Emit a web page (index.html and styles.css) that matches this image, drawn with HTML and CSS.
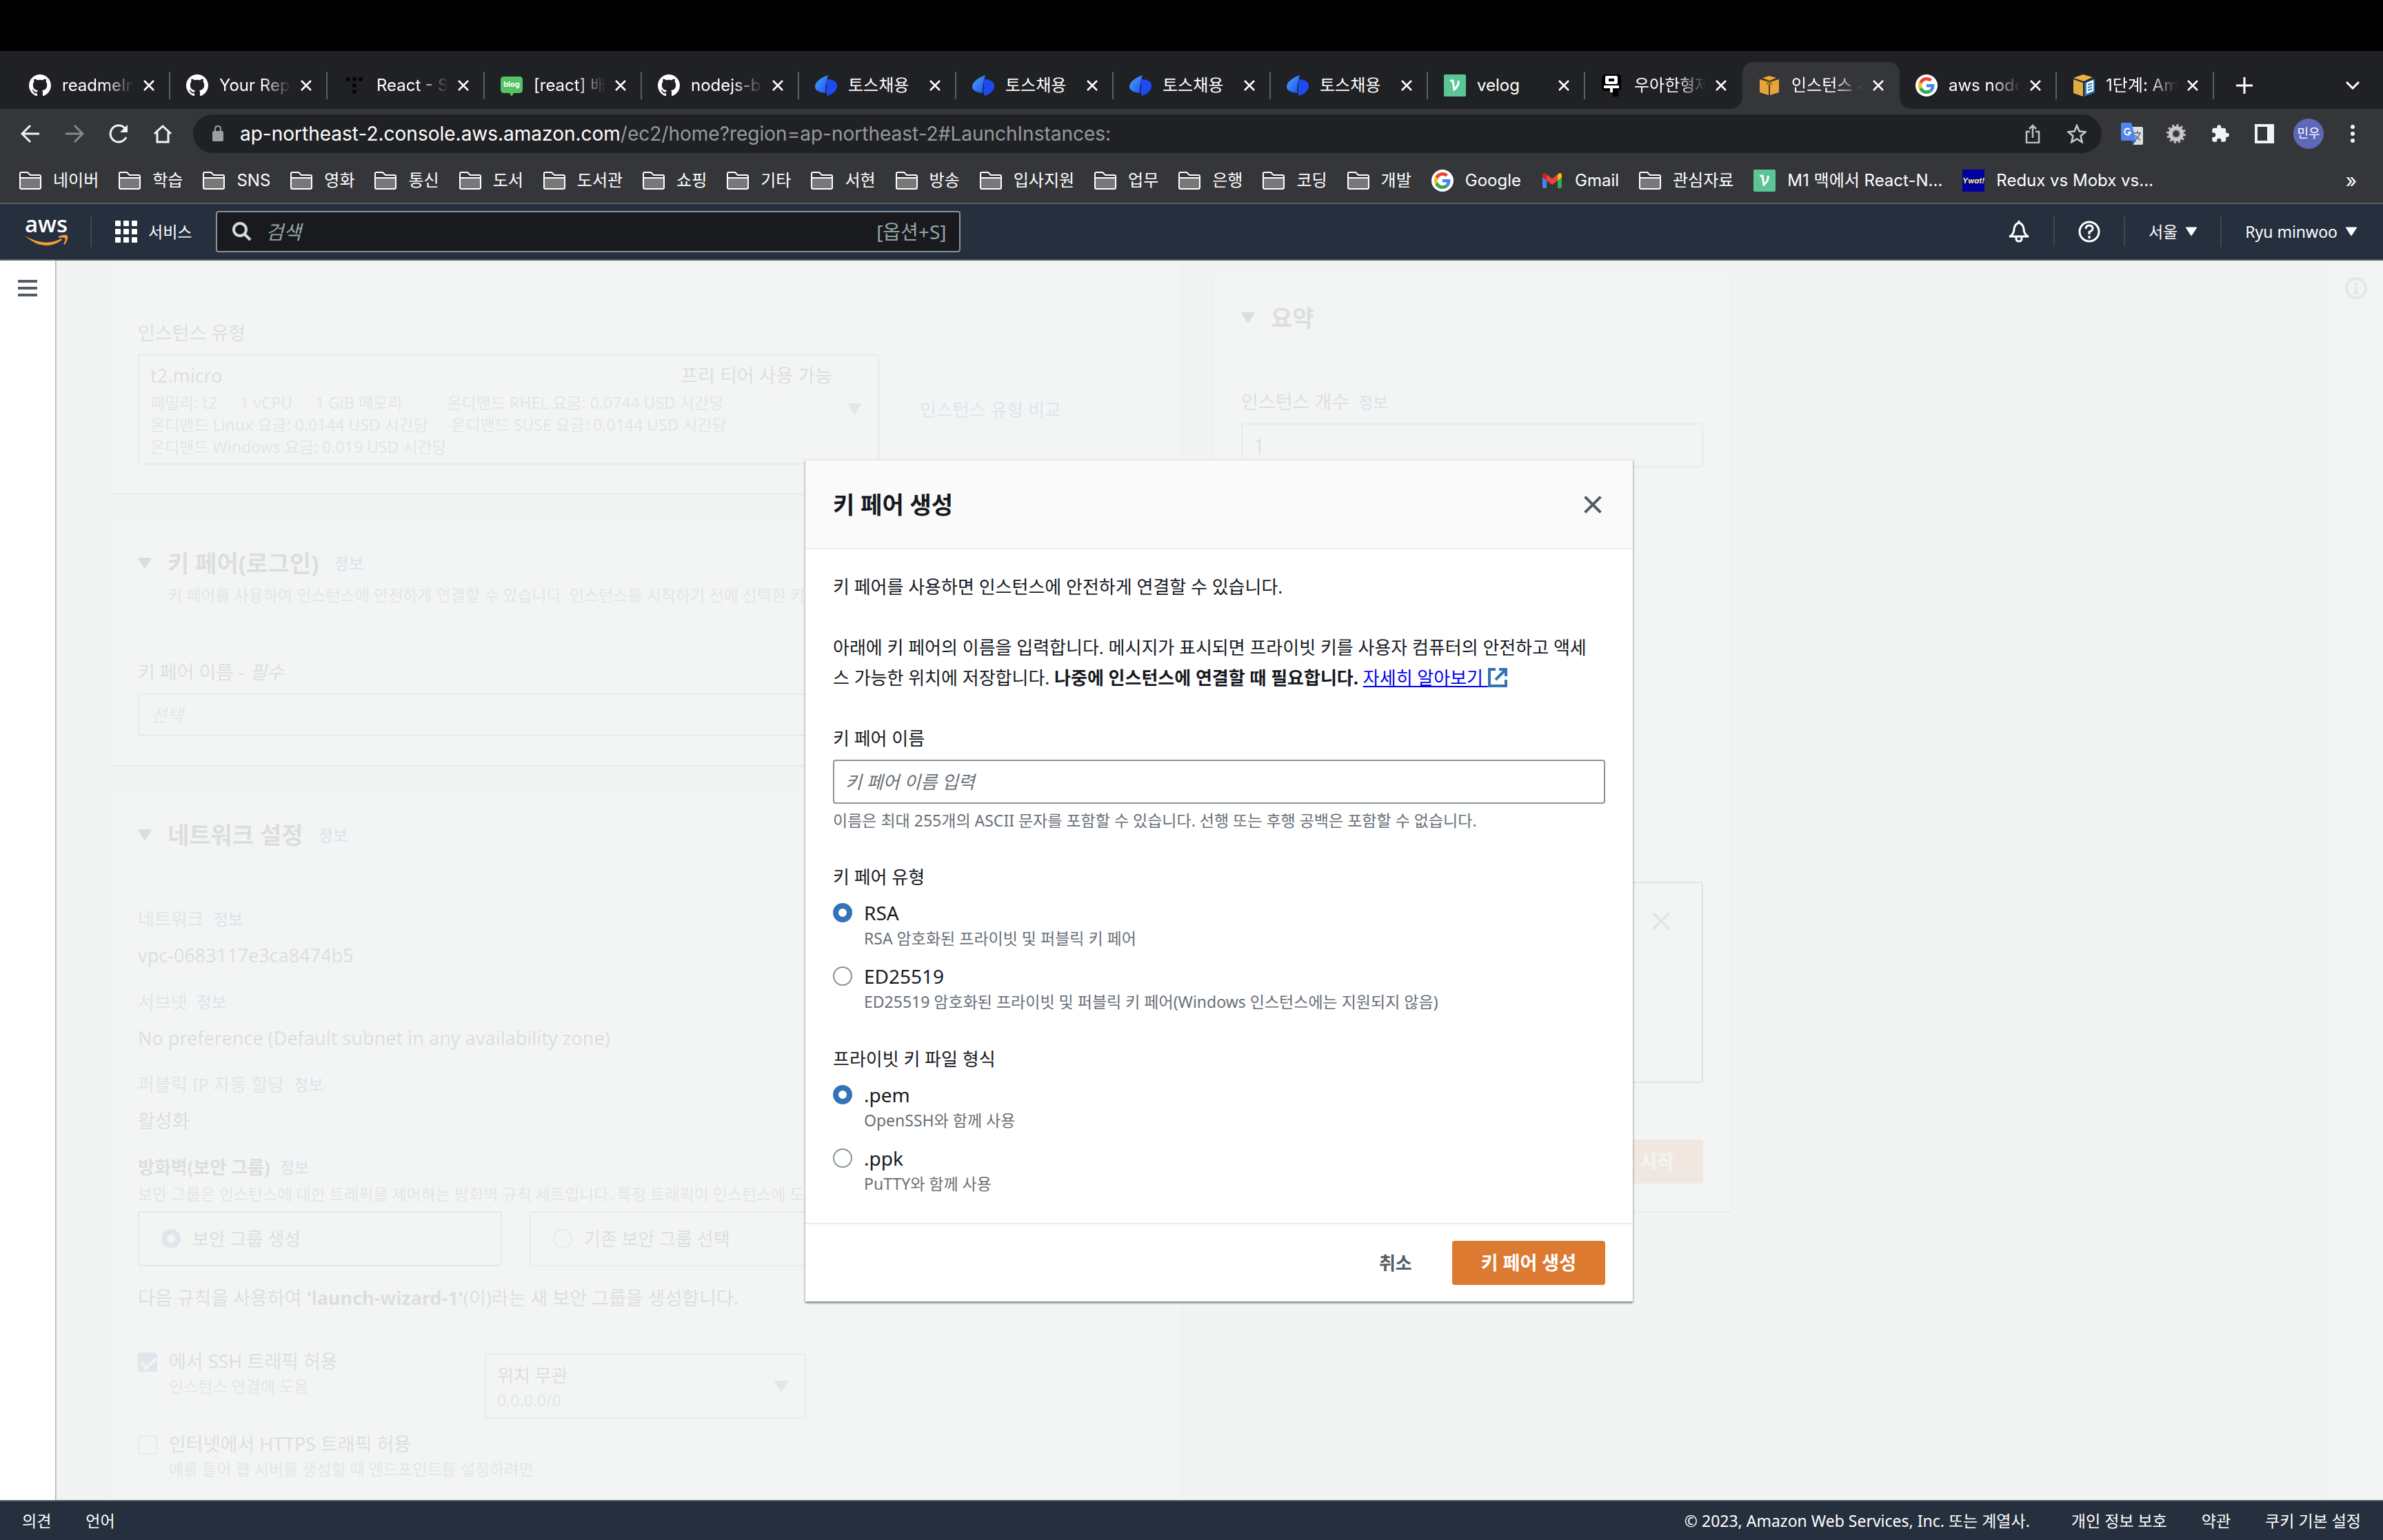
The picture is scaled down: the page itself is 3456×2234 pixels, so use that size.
FILE: index.html
```html
<!DOCTYPE html>
<html lang="ko">
<head>
<meta charset="utf-8">
<title>인스턴스 시작 | EC2 Management Console</title>
<link rel="stylesheet" href="styles.css">
</head>
<body>
<svg class="defs" aria-hidden="true">
  <symbol id="github" viewBox="0 0 16 16"><path fill="#fff" d="M8 0C3.58 0 0 3.58 0 8c0 3.54 2.29 6.53 5.47 7.59.4.07.55-.17.55-.38 0-.19-.01-.82-.01-1.49-2.01.37-2.53-.49-2.69-.94-.09-.23-.48-.94-.82-1.13-.28-.15-.68-.52-.01-.53.63-.01 1.08.58 1.23.82.72 1.21 1.87.87 2.33.66.07-.52.28-.87.51-1.07-1.78-.2-3.64-.89-3.64-3.95 0-.87.31-1.59.82-2.15-.08-.2-.36-1.02.08-2.12 0 0 .67-.21 2.2.82.64-.18 1.32-.27 2-.27s1.36.09 2 .27c1.53-1.04 2.2-.82 2.2-.82.44 1.1.16 1.92.08 2.12.51.56.82 1.27.82 2.15 0 3.07-1.87 3.75-3.65 3.95.29.25.54.73.54 1.48 0 1.07-.01 1.93-.01 2.2 0 .21.15.46.55.38A8.01 8.01 0 0 0 16 8c0-4.42-3.58-8-8-8z"/></symbol>
  <symbol id="dots-t" viewBox="0 0 32 32"><g fill="#050505"><circle cx="7" cy="7" r="3"/><circle cx="16" cy="7" r="3"/><circle cx="25" cy="7" r="3"/><circle cx="16" cy="16" r="3"/><circle cx="16" cy="25" r="3"/></g></symbol>
  <symbol id="toss" viewBox="0 0 32 32"><defs><linearGradient id="tg" x1="0" y1="0" x2="1" y2="1"><stop offset="0" stop-color="#4aa8fb"/><stop offset="1" stop-color="#1b4ff0"/></linearGradient></defs><path fill="#1c4bf2" d="M17 7c10 0 15 4 15 9 0 7-5 12-14 15-2-3-2-8-1-13z"/><path fill="url(#tg)" d="M19 1C8 5 0 11 0 18c0 5 6 8 15 9 0-9 1-17 4-26z"/></symbol>
  <symbol id="velog" viewBox="0 0 32 32"><rect width="32" height="32" rx="2" fill="#5cc596"/><path fill="none" stroke="#fff" stroke-width="3" d="M9 9h4l2 13c5-4 7-8 6-13"/></symbol>
  <symbol id="woowa" viewBox="0 0 32 32"><path fill="#000" d="M5 0h20q4 0 4 4v16q0 3-4 3v9h-8v-8H4l-3-3V3z"/><path fill="#fff" fill-rule="evenodd" d="M8 2h14q2 0 2 2v8q0 2-2 2H8q-2 0-2-2V4q0-2 2-2zm3 4v4h8V6zM4 16h22v4h-9v6h-4v-6H4z"/></symbol>
  <symbol id="ec2cube" viewBox="0 0 32 32"><path fill="#f0a72f" d="M16 2l10 3-10 4L6 5z"/><path fill="#e8a535" d="M2 7l13 4v19L2 26zM30 7l-13 4v19l13-4z"/><path fill="#b97516" d="M12 9l4 2 4-2v6h-8z"/></symbol>
  <symbol id="google" viewBox="0 0 48 48"><circle cx="24" cy="24" r="24" fill="#fff"/><g transform="translate(6 6) scale(.75)"><path fill="#EA4335" d="M24 9.500c3.540 0 6.710 1.220 9.210 3.600l6.850-6.850C35.900 2.380 30.470 0 24 0 14.620 0 6.510 5.380 2.560 13.220l7.980 6.190C12.430 13.720 17.740 9.500 24 9.500z"/><path fill="#4285F4" d="M46.980 24.550c0-1.570-.15-3.090-.38-4.550H24v9.020h12.940c-.58 2.960-2.260 5.480-4.780 7.180l7.730 6c4.510-4.180 7.090-10.360 7.090-17.650z"/><path fill="#FBBC05" d="M10.530 28.590c-.48-1.450-.76-2.990-.76-4.590s.27-3.140.76-4.590l-7.980-6.190C.92 16.460 0 20.120 0 24c0 3.880.92 7.540 2.560 10.780z"/><path fill="#34A853" d="M24 48c6.480 0 11.930-2.130 15.890-5.810l-7.730-6c-2.150 1.450-4.920 2.300-8.160 2.300-6.260 0-11.570-4.220-13.470-9.910l-7.980 6.190C6.510 42.620 14.620 48 24 48z"/></g></symbol>
  <symbol id="awsdocs" viewBox="0 0 32 32"><path fill="#e9b243" d="M15 0l14 4-13 6L1 5z"/><path fill="#e2ab40" d="M1 7l14 5v20L1 27z"/><path fill="#2a7ab8" d="M17 12l15-6v20l-15 6z"/><path fill="#fff" d="M20 12l10-4v16l-10 4z"/><path stroke="#2a7ab8" stroke-width="2" d="M22 15l6-2M22 19l6-2M22 23l6-2"/></symbol>
  <symbol id="close" viewBox="0 0 16 16"><path fill="none" stroke="currentColor" stroke-width="2.500" d="M1 1l14 14M15 1L1 15"/></symbol>
  <symbol id="folder" viewBox="0 0 32 26"><path fill="#77787a" d="M2 9h28v15H2z"/><path fill="none" stroke="#fff" stroke-width="2" d="M3 1h9l4 4h13q2 0 2 2v16q0 2-2 2H3q-2 0-2-2V3q0-2 2-2zM1 9h30"/></symbol>
  <symbol id="gmail" viewBox="0 0 32 32"><path fill="#4285f4" d="M2 8l6 5v14H4q-2 0-2-2z"/><path fill="#34a853" d="M30 8l-6 5v14h4q2 0 2-2z"/><path fill="#fbbc04" d="M24 7l3-2q3 0 3 3v3l-6 5z"/><path fill="#c5221f" d="M8 7L5 5Q2 5 2 8v3l6 5z"/><path fill="#ea4335" d="M8 7l8 6 8-6v9l-8 6-8-6z"/></symbol>
  <symbol id="tri" viewBox="0 0 20 16"><path fill="currentColor" d="M0 1Q0 0 1 0h18q1 0 1 1L11 15q-1 1-2 0z"/></symbol>
</svg>

<div class="menubar"></div>

<nav class="tabstrip" aria-label="탭">
  <div class="tab"><svg class="fav"><use href="#github"/></svg><span class="tab-title">readmeIn</span><button class="x" aria-label="닫기"><svg><use href="#close"/></svg></button></div>
  <div class="tab"><svg class="fav"><use href="#github"/></svg><span class="tab-title">Your Repo</span><button class="x" aria-label="닫기"><svg><use href="#close"/></svg></button></div>
  <div class="tab"><svg class="fav"><use href="#dots-t"/></svg><span class="tab-title">React - S</span><button class="x" aria-label="닫기"><svg><use href="#close"/></svg></button></div>
  <div class="tab"><svg class="fav" viewBox="0 0 32 32"><path fill="#57c264" d="M5 3h22q5 0 5 5v14q0 5-5 5h-8l-3 5-3-5H5q-5 0-5-5V8q0-5 5-5z"/><text x="16" y="18" font-size="11" font-weight="700" text-anchor="middle" fill="#fff" font-family="Inter, sans-serif">blog</text></svg><span class="tab-title">[react] 배</span><button class="x" aria-label="닫기"><svg><use href="#close"/></svg></button></div>
  <div class="tab"><svg class="fav"><use href="#github"/></svg><span class="tab-title">nodejs-b</span><button class="x" aria-label="닫기"><svg><use href="#close"/></svg></button></div>
  <div class="tab"><svg class="fav"><use href="#toss"/></svg><span class="tab-title short">토스채용</span><button class="x" aria-label="닫기"><svg><use href="#close"/></svg></button></div>
  <div class="tab"><svg class="fav"><use href="#toss"/></svg><span class="tab-title short">토스채용</span><button class="x" aria-label="닫기"><svg><use href="#close"/></svg></button></div>
  <div class="tab"><svg class="fav"><use href="#toss"/></svg><span class="tab-title short">토스채용</span><button class="x" aria-label="닫기"><svg><use href="#close"/></svg></button></div>
  <div class="tab"><svg class="fav"><use href="#toss"/></svg><span class="tab-title short">토스채용</span><button class="x" aria-label="닫기"><svg><use href="#close"/></svg></button></div>
  <div class="tab"><svg class="fav"><use href="#velog"/></svg><span class="tab-title short">velog</span><button class="x" aria-label="닫기"><svg><use href="#close"/></svg></button></div>
  <div class="tab no-sep"><svg class="fav"><use href="#woowa"/></svg><span class="tab-title">우아한형제</span><button class="x" aria-label="닫기"><svg><use href="#close"/></svg></button></div>
  <div class="tab active no-sep"><svg class="fav"><use href="#ec2cube"/></svg><span class="tab-title">인스턴스 시</span><button class="x" aria-label="닫기"><svg><use href="#close"/></svg></button></div>
  <div class="tab"><svg class="fav"><use href="#google"/></svg><span class="tab-title">aws node</span><button class="x" aria-label="닫기"><svg><use href="#close"/></svg></button></div>
  <div class="tab"><svg class="fav"><use href="#awsdocs"/></svg><span class="tab-title">1단계: Am</span><button class="x" aria-label="닫기"><svg><use href="#close"/></svg></button></div>
  <button class="newtab" aria-label="새 탭"><svg viewBox="0 0 24 24"><path stroke="#fff" stroke-width="3" d="M12 0v24M0 12h24"/></svg></button>
  <button class="tabsearch" aria-label="탭 검색"><svg viewBox="0 0 20 12"><path fill="none" stroke="#fff" stroke-width="3" d="M1 1l9 9 9-9"/></svg></button>
</nav>

<div class="toolbar">
  <button class="tool" aria-label="뒤로"><svg viewBox="0 0 28 28"><path fill="none" stroke="#f1f3f4" stroke-width="3" d="M27 14H3M14 2L2 14l12 12"/></svg></button>
  <button class="tool" aria-label="앞으로"><svg viewBox="0 0 28 28"><path fill="none" stroke="#86888a" stroke-width="3" d="M1 14h24M14 2l12 12-12 12"/></svg></button>
  <button class="tool" aria-label="새로고침"><svg viewBox="0 0 28 28"><path fill="none" stroke="#f1f3f4" stroke-width="3" d="M23 6a12 12 0 1 0 2 13"/><path fill="#f1f3f4" d="M27 1v11H16z"/></svg></button>
  <button class="tool" aria-label="홈"><svg viewBox="0 0 28 28"><path fill="none" stroke="#f1f3f4" stroke-width="3" d="M2 14L14 3l12 11M6 12v14h16V12"/></svg></button>
  <div class="address">
    <svg class="lock" viewBox="0 0 18 24"><path fill="none" stroke="#9aa0a6" stroke-width="2" d="M5 9V5q0-4 4-4t4 4v4"/><rect x="1" y="8" width="16" height="15" rx="2" fill="#9aa0a6"/></svg>
    <span class="url">ap-northeast-2.console.aws.amazon.com<span class="path">/ec2/home?region=ap-northeast-2#LaunchInstances:</span></span>
    <button class="tool" aria-label="공유"><svg viewBox="0 0 28 28"><path fill="none" stroke="#bdc1c6" stroke-width="2.500" d="M10 11H5v16h18V11h-5M14 20V2M9 7l5-5 5 5"/></svg></button>
    <button class="tool" aria-label="북마크"><svg viewBox="0 0 28 28"><path fill="none" stroke="#c8cbcf" stroke-width="2.500" d="M14 2l3.500 8.500 9 .8-7 6 2.200 9L14 21.500 6.300 26.300l2.200-9-7-6 9-.8z"/></svg></button>
  </div>
  <button class="tool" aria-label="번역"><svg class="wide" viewBox="0 0 32 32"><path fill="#dcdee0" d="M12 6h18q2 0 2 2v22q0 2-2 2H18z"/><path fill="none" stroke="#6b7f92" stroke-width="2" d="M19 15h10M24 12v3M27 15q-2 8-7 10M21 18q2 5 7 7"/><path fill="#5086ec" d="M2 0h13l7 26H2q-2 0-2-2V2q0-2 2-2z"/><path fill="#3551c8" d="M15 26h7l-5 6z"/><path fill="none" stroke="#fff" stroke-width="2" d="M13 10a4.500 4.500 0 1 0 1 4h-4"/></svg></button>
  <button class="tool" aria-label="확장 설정"><svg viewBox="0 0 28 28"><circle cx="14" cy="14" r="12" fill="none" stroke="#b9b9b9" stroke-width="4" stroke-dasharray="3.100 3.180"/><circle cx="14" cy="14" r="8" fill="none" stroke="#c9c9c9" stroke-width="6"/><circle cx="14" cy="14" r="5" fill="#35363a" stroke="#777" stroke-width="1.500"/></svg></button>
  <button class="tool" aria-label="확장 프로그램"><svg viewBox="0 0 24 24"><path fill="#f1f3f4" d="M20.500 11H19V7c0-1.100-.9-2-2-2h-4V3.500a2.500 2.500 0 0 0-5 0V5H4c-1.100 0-2 .9-2 2v3.800h1.500a2.700 2.700 0 0 1 0 5.400H2V20c0 1.100.9 2 2 2h3.800v-1.500a2.700 2.700 0 0 1 5.400 0V22H17c1.100 0 2-.9 2-2v-4h1.500a2.500 2.500 0 0 0 0-5z"/></svg></button>
  <button class="tool" aria-label="사이드 패널"><svg viewBox="0 0 28 28"><path fill="#f1f3f4" fill-rule="evenodd" d="M0 0h28v28H0zM4 4v20h14V4z"/></svg></button>
  <button class="tool" aria-label="프로필"><span class="avatar">민우</span></button>
  <button class="tool" aria-label="메뉴"><svg viewBox="0 0 28 28"><g fill="#f1f3f4"><circle cx="14" cy="4" r="3"/><circle cx="14" cy="14" r="3"/><circle cx="14" cy="24" r="3"/></g></svg></button>
</div>

<nav class="bookmarks" aria-label="북마크">
  <a href="#"><svg class="fold"><use href="#folder"/></svg>네이버</a>
  <a href="#"><svg class="fold"><use href="#folder"/></svg>학습</a>
  <a href="#"><svg class="fold"><use href="#folder"/></svg>SNS</a>
  <a href="#"><svg class="fold"><use href="#folder"/></svg>영화</a>
  <a href="#"><svg class="fold"><use href="#folder"/></svg>통신</a>
  <a href="#"><svg class="fold"><use href="#folder"/></svg>도서</a>
  <a href="#"><svg class="fold"><use href="#folder"/></svg>도서관</a>
  <a href="#"><svg class="fold"><use href="#folder"/></svg>쇼핑</a>
  <a href="#"><svg class="fold"><use href="#folder"/></svg>기타</a>
  <a href="#"><svg class="fold"><use href="#folder"/></svg>서현</a>
  <a href="#"><svg class="fold"><use href="#folder"/></svg>방송</a>
  <a href="#"><svg class="fold"><use href="#folder"/></svg>입사지원</a>
  <a href="#"><svg class="fold"><use href="#folder"/></svg>업무</a>
  <a href="#"><svg class="fold"><use href="#folder"/></svg>은행</a>
  <a href="#"><svg class="fold"><use href="#folder"/></svg>코딩</a>
  <a href="#"><svg class="fold"><use href="#folder"/></svg>개발</a>
  <a href="#"><svg class="fav"><use href="#google"/></svg>Google</a>
  <a href="#"><svg class="fav"><use href="#gmail"/></svg>Gmail</a>
  <a href="#"><svg class="fold"><use href="#folder"/></svg>관심자료</a>
  <a href="#"><svg class="fav"><use href="#velog"/></svg>M1 맥에서 React-N...</a>
  <a href="#"><svg class="fav" viewBox="0 0 32 32"><rect width="32" height="32" fill="#0000a0"/><text x="16" y="20" font-size="11" font-weight="700" font-style="italic" text-anchor="middle" fill="#f5f06a" font-family="Inter, sans-serif">Ywat!</text></svg>Redux vs Mobx vs...</a>
  <button class="more" aria-label="북마크 더보기">»</button>
</nav>

<header class="console-nav">
  <a class="logo" href="#" aria-label="AWS"><svg viewBox="0 0 64 42"><text x="32" y="22" font-size="33" font-weight="600" text-anchor="middle" fill="#fff" font-family="Open Sans, Noto Sans, sans-serif">aws</text><path fill="#f29d38" d="M1 27q29 17 53 4l1 2q-26 19-54-6z"/><path fill="#f29d38" d="M50 28q9-4 13-1 1 5-4 13l-2-1q4-7 2-9-3-1-9 0z"/></svg></a>
  <span class="divider"></span>
  <button class="services"><svg viewBox="0 0 32 32"><g fill="#fff"><rect width="8" height="8" rx="1"/><rect x="12" width="8" height="8" rx="1"/><rect x="24" width="8" height="8" rx="1"/><rect y="12" width="8" height="8" rx="1"/><rect x="12" y="12" width="8" height="8" rx="1"/><rect x="24" y="12" width="8" height="8" rx="1"/><rect y="24" width="8" height="8" rx="1"/><rect x="12" y="24" width="8" height="8" rx="1"/><rect x="24" y="24" width="8" height="8" rx="1"/></g></svg>서비스</button>
  <label class="search">
    <svg viewBox="0 0 28 28"><circle cx="11" cy="11" r="9" fill="none" stroke="#d5dbdb" stroke-width="4"/><path stroke="#d5dbdb" stroke-width="4" d="M17 17l9 9"/></svg>
    <input type="search" placeholder="검색" aria-label="검색">
    <span class="hint">[옵션+S]</span>
  </label>
  <div class="nav-right">
    <button aria-label="알림"><svg class="ic32" viewBox="0 0 32 32"><path fill="none" stroke="#fff" stroke-width="3" stroke-linejoin="round" d="M16 3q-6 2-7 9 0 7-6 11h26q-6-4-6-11-1-7-7-9zM12 24v2q0 4 4 4t4-4v-2M16 0v4"/></svg></button>
    <span class="divider"></span>
    <button aria-label="도움말"><svg class="ic32" viewBox="0 0 32 32"><circle cx="16" cy="16" r="14" fill="none" stroke="#fff" stroke-width="3"/><path fill="none" stroke="#fff" stroke-width="3" d="M11 12q0-5 5-5t5 4.500q0 3-5 5V20M16 22v4"/></svg></button>
    <span class="divider"></span>
    <button class="menu">서울<svg><use href="#tri"/></svg></button>
    <span class="divider"></span>
    <button class="menu">Ryu minwoo<svg><use href="#tri"/></svg></button>
  </div>
</header>

<div class="workspace">
  <aside class="rail"><button aria-label="탐색 열기"><span></span><span></span><span></span></button></aside>

  <div class="stage">
    <main class="page">
      <div class="col-main">
        <section class="card continued">
          <div class="card-head"></div>
          <div class="card-body">
            <h3 class="label">인스턴스 유형</h3>
            <div class="type-row">
              <button class="type-select" aria-haspopup="listbox">
                <span class="opts">
                  <span class="opt-top"><span>t2.micro</span><span>프리 티어 사용 가능</span></span>
                  <span class="specs"><span class="g1">패밀리: t2</span><span class="g1">1 vCPU</span><span class="g2">1 GiB 메모리</span><span>온디맨드 RHEL 요금: 0.0744 USD 시간당</span></span>
                  <span class="specs"><span class="g1">온디맨드 Linux 요금: 0.0144 USD 시간당</span><span>온디맨드 SUSE 요금: 0.0144 USD 시간당</span></span>
                  <span class="specs"><span>온디맨드 Windows 요금: 0.019 USD 시간당</span></span>
                </span>
                <svg class="tri"><use href="#tri"/></svg>
              </button>
              <a class="lnk" href="#">인스턴스 유형 비교</a>
            </div>
          </div>
        </section>

        <section class="card">
          <div class="card-head keypair">
            <div class="title"><svg class="tri"><use href="#tri"/></svg><h2>키 페어(로그인)</h2><a class="info" href="#">정보</a></div>
            <p class="desc">키 페어를 사용하여 인스턴스에 안전하게 연결할 수 있습니다. 인스턴스를 시작하기 전에 선택한 키 페어</p>
          </div>
          <div class="card-body">
            <label class="label" for="kp">키 페어 이름 - <em>필수</em></label>
            <select id="kp" class="field wide-select"><option>선택</option></select>
          </div>
        </section>

        <section class="card">
          <div class="card-head network">
            <div class="title"><svg class="tri"><use href="#tri"/></svg><h2>네트워크 설정</h2><a class="info" href="#">정보</a></div>
          </div>
          <div class="card-body net-body">
            <dl>
              <dt>네트워크<a class="info" href="#">정보</a></dt><dd>vpc-0683117e3ca8474b5</dd>
              <dt>서브넷<a class="info" href="#">정보</a></dt><dd>No preference (Default subnet in any availability zone)</dd>
              <dt>퍼블릭 IP 자동 할당<a class="info" href="#">정보</a></dt><dd>활성화</dd>
            </dl>
            <h3 class="fw">방화벽(보안 그룹)<a class="info" href="#">정보</a></h3>
            <p class="desc">보안 그룹은 인스턴스에 대한 트래픽을 제어하는 방화벽 규칙 세트입니다. 특정 트래픽이 인스턴스에 도달</p>
            <div class="tiles">
              <label class="tile on"><input type="radio" name="sg" checked>보안 그룹 생성</label>
              <label class="tile"><input type="radio" name="sg">기존 보안 그룹 선택</label>
            </div>
            <p class="sentence">다음 규칙을 사용하여 <b>'launch-wizard-1'</b>(이)라는 새 보안 그룹을 생성합니다.</p>
            <div class="rule">
              <label class="check"><input type="checkbox" checked><span>에서 SSH 트래픽 허용<small>인스턴스 연결에 도움</small></span></label>
              <button class="src" aria-haspopup="listbox"><span>위치 무관<small>0.0.0.0/0</small></span><svg class="tri"><use href="#tri"/></svg></button>
            </div>
            <div class="rule">
              <label class="check"><input type="checkbox"><span>인터넷에서 HTTPS 트래픽 허용<small>예를 들어 웹 서버를 생성할 때 엔드포인트를 설정하려면</small></span></label>
            </div>
          </div>
        </section>
      </div>

      <div class="col-side">
        <section class="card">
          <div class="card-head summary-head"><div class="title"><svg class="tri"><use href="#tri"/></svg><h2>요약</h2></div></div>
          <div class="card-body side-body">
            <label class="label" for="count">인스턴스 개수<a class="info" href="#">정보</a></label>
            <input id="count" class="field" type="text" value="1">
            <hr>
            <div class="tip"><button aria-label="닫기"><svg><use href="#close"/></svg></button></div>
          </div>
        </section>
        <section class="card launch"><button class="primary">인스턴스 시작</button></section>
      </div>
    </main>
    <aside class="info-rail"><button aria-label="정보"><svg class="ic32" viewBox="0 0 32 32"><circle cx="16" cy="16" r="14" fill="none" stroke="#687078" stroke-width="4"/><path fill="#687078" d="M14 8h4v4h-4zM13 14h5v7h2v4h-8v-4h2v-4h-1z"/></svg></button></aside>

    <div class="backdrop">
      <div class="modal" role="dialog" aria-modal="true" aria-labelledby="dlg-title">
        <div class="modal-head">
          <h2 id="dlg-title">키 페어 생성</h2>
          <button class="dismiss" aria-label="닫기"><svg><use href="#close"/></svg></button>
        </div>
        <div class="modal-body">
          <p>키 페어를 사용하면 인스턴스에 안전하게 연결할 수 있습니다.</p>
          <p>아래에 키 페어의 이름을 입력합니다. 메시지가 표시되면 프라이빗 키를 사용자 컴퓨터의 안전하고 액세<br>스 가능한 위치에 저장합니다. <b>나중에 인스턴스에 연결할 때 필요합니다.</b> <a class="ext" href="#">자세히 알아보기 </a><svg class="ext-icon" viewBox="0 0 28 28"><path fill="none" stroke="#3471b7" stroke-width="4" d="M11 2H2v24h24v-9M16 2h10v10M25 3L11 17"/></svg></p>
          <div class="group">
            <label class="glabel" for="name">키 페어 이름</label>
            <input id="name" class="name" type="text" placeholder="키 페어 이름 입력">
            <small>이름은 최대 255개의 ASCII 문자를 포함할 수 있습니다. 선행 또는 후행 공백은 포함할 수 없습니다.</small>
          </div>
          <div class="group">
            <span class="glabel">키 페어 유형</span>
            <label class="radio"><input type="radio" name="type" checked><span>RSA<small>RSA 암호화된 프라이빗 및 퍼블릭 키 페어</small></span></label>
            <label class="radio"><input type="radio" name="type"><span>ED25519<small>ED25519 암호화된 프라이빗 및 퍼블릭 키 페어(Windows 인스턴스에는 지원되지 않음)</small></span></label>
          </div>
          <div class="group">
            <span class="glabel">프라이빗 키 파일 형식</span>
            <label class="radio"><input type="radio" name="format" checked><span>.pem<small>OpenSSH와 함께 사용</small></span></label>
            <label class="radio"><input type="radio" name="format"><span>.ppk<small>PuTTY와 함께 사용</small></span></label>
          </div>
        </div>
        <div class="modal-foot"><button class="cancel">취소</button><button class="create">키 페어 생성</button></div>
      </div>
    </div>
  </div>
</div>

<footer class="footer">
  <a href="#">의견</a><a href="#">언어</a>
  <span class="copy">© 2023, Amazon Web Services, Inc. 또는 계열사.</span>
  <a href="#">개인 정보 보호</a><a href="#">약관</a><a href="#">쿠키 기본 설정</a>
</footer>
</body>
</html>
```
FILE: styles.css
```css
* { box-sizing: border-box; }

body {
  margin: 0;
  height: 100vh;
  display: flex;
  flex-direction: column;
  overflow: hidden;
  background: #f2f3f3;
  color: #16191f;
  font: 26px/40px "Noto Sans", "Noto Sans CJK KR", sans-serif;
}

button, input, select { font: inherit; color: inherit; margin: 0; }
button { background: none; border: 0; padding: 0; display: flex; align-items: center; justify-content: center; }
a { color: inherit; text-decoration: none; }
h2, h3, p, dl, dd { margin: 0; }
svg { display: block; flex: none; }
small { display: block; font-size: 23px; line-height: 32px; color: #545b64; }
.defs { position: absolute; width: 0; height: 0; }

/* browser frame */
.menubar { flex: none; height: 74px; background: #000; }

.tabstrip, .toolbar, .bookmarks {
  flex: none;
  display: flex;
  align-items: center;
  color: #fff;
  font-family: Inter, "Noto Sans CJK KR", sans-serif;
  font-size: 24px;
  line-height: 32px;
}

.tabstrip { height: 84px; padding: 16px 28px 0 19px; background: #202124; }
.tab { position: relative; flex: 0 1 228px; height: 68px; display: flex; align-items: center; padding: 0 23px; min-width: 0; }
.tab::after { content: ""; position: absolute; right: 0; top: 14px; width: 2px; height: 40px; background: #5c5e62; }
.tab.no-sep::after { display: none; }
.tab.active { background: #35363a; border-radius: 16px 16px 0 0; }
.tab.active::before { content: ""; position: absolute; left: -16px; right: -16px; bottom: 0; height: 16px;
  background: radial-gradient(circle at 0 0, transparent 15px, #35363a 16px) left / 16px 16px no-repeat,
    radial-gradient(circle at 100% 0, transparent 15px, #35363a 16px) right / 16px 16px no-repeat; }
.fav { width: 32px; height: 32px; }
.tab-title { flex: 1; min-width: 0; margin: 0 14px 0 16px; white-space: nowrap; overflow: hidden; -webkit-mask-image: linear-gradient(90deg, #000 60%, transparent); mask-image: linear-gradient(90deg, #000 60%, transparent); }
.tab-title.short { -webkit-mask-image: none; mask-image: none; }
.x svg { width: 16px; height: 16px; }
.newtab { margin-left: 32px; }
.newtab svg { width: 24px; height: 24px; }
.tabsearch { margin-left: auto; margin-right: 6px; }
.tabsearch svg { width: 20px; height: 12px; }

.toolbar { height: 72px; padding: 0 12px; background: #35363a; }
.tool { flex: none; width: 64px; height: 56px; }
.tool svg { width: 28px; height: 28px; }
.tool .wide { width: 32px; height: 32px; }
.address { flex: 1; display: flex; align-items: center; height: 56px; margin: 0 12px; padding: 0 4px 0 27px; border-radius: 28px; background: #202124; font-size: 28px; }
.lock { width: 18px; height: 24px; }
.url { flex: 1; margin-left: 23px; }
.path { color: #969a9f; }
.avatar { width: 44px; height: 44px; border-radius: 22px; background: #5e68b9; font-size: 18px; line-height: 44px; }

.bookmarks { height: 66px; gap: 29px; padding: 0 38px 0 28px; background: #35363a; border-bottom: 2px solid #5c5e62; white-space: nowrap; }
.bookmarks a { display: flex; align-items: center; gap: 17px; }
.fold { width: 32px; height: 26px; }
.more { margin-left: auto; font-size: 28px; }

/* console top navigation */
.console-nav { flex: none; height: 82px; display: flex; align-items: center; padding: 0 38px 0 35px; background: #252f3e; border-bottom: 2px solid #545b64; color: #fff; font-size: 23px; }
.logo svg { width: 64px; height: 42px; }
.divider { width: 2px; height: 44px; background: #414750; }
.console-nav > .divider { margin: 0 34px 0 32px; }
.services { gap: 16px; }
.services svg, .ic32 { width: 32px; height: 32px; }
.search { display: flex; align-items: center; width: 1080px; height: 60px; margin-left: 35px; padding: 0 19px 0 22px; border: 2px solid #879596; border-radius: 4px; background: #191a1e; color: #95a5a6; font-size: 28px; }
.search svg { width: 28px; height: 28px; }
.search input { flex: 1; min-width: 0; margin-left: 20px; padding: 0; border: 0; background: none; outline: 0; }
.search input::placeholder { color: #95a5a6; font-style: italic; }
.nav-right { margin-left: auto; display: flex; align-items: center; gap: 34px; }
.menu { gap: 12px; }
.menu svg { width: 16px; height: 14px; }

/* workspace */
.workspace { flex: 1; min-height: 0; display: flex; }
.rail { position: relative; z-index: 1; flex: none; width: 80px; padding: 28px 26px; background: #fff; box-shadow: 1px 0 2px #879596; }
.rail button { flex-direction: column; gap: 6px; }
.rail span { width: 28px; height: 4px; background: #545b64; }
.stage { position: relative; flex: 1; min-width: 0; display: flex; overflow: hidden; }
.page { flex: 1; display: grid; grid-template-columns: minmax(0, 1555px) minmax(0, 752px); gap: 45px; align-items: start; padding-left: 79px; }
.info-rail { flex: none; width: 81px; padding: 24px 24px; background: #fafafa; border-left: 2px solid #d5dbdb; }

.col-main { display: flex; flex-direction: column; gap: 40px; }
.col-side { padding-top: 21px; }
.card { background: #fff; border: 1px solid #d5dbdb; border-top-color: #eaeded; box-shadow: 0 2px 2px rgba(0, 28, 36, .4); }
.card.continued { border-top: 0; }
.card-head { min-height: 43px; padding: 0 40px; background: #fafafa; border-bottom: 2px solid #eaeded; }
.card-body { padding: 32px 40px 41px; }
.continued .card-body { padding-top: 40px; }
.label, .glabel { display: flex; align-items: center; line-height: 44px; }
.label { margin-bottom: 9px; font-size: 27px; font-weight: 400; }
.label em { margin-left: 8px; }
.type-row { display: flex; align-items: center; gap: 59px; }
.type-select { flex: 0 1 1075px; padding: 6px 24px 8px 16px; border: 2px solid #879596; border-radius: 4px; text-align: left; gap: 22px; }
.opts { flex: 1; display: block; }
.opt-top { display: flex; justify-content: space-between; font-size: 27px; line-height: 46px; }
.specs { display: flex; font-size: 23px; line-height: 32px; color: #545b64; white-space: nowrap; }
.g1 { margin-right: 33px; }
.g2 { margin-right: 65px; }
.tri { width: 20px; height: 16px; color: #16191f; }
.type-select .tri, .src .tri { color: #687078; }
.lnk, .info { color: #0a58b5; }
.info { margin-left: 14px; font-size: 23px; font-weight: 500; }

.title { display: flex; align-items: center; }
.title h2 { margin-left: 23px; font-size: 34px; line-height: 48px; }
.title .info { margin-left: 22px; }
.desc { font-size: 23px; line-height: 32px; color: #545b64; white-space: nowrap; overflow: hidden; }
.keypair { padding-top: 36px; padding-bottom: 40px; }
.keypair .desc { margin: 6px 0 0 43px; }
.network { padding-top: 36px; padding-bottom: 42px; }
.field { width: 100%; height: 62px; padding: 0 16px; border: 2px solid #879596; border-radius: 4px; background: #fff; appearance: none; }
.wide-select { display: block; width: 1075px; font-style: italic; color: #687078; }

.net-body { padding-top: 34px; }
dt { display: flex; color: #545b64; }
dd { margin: 13px 0 27px; font-size: 27px; }
.fw { display: flex; font-size: 26px; }
.net-body > .desc { margin: 3px 0 9px; }
.tiles { display: grid; grid-template-columns: 528px 528px; gap: 40px; }
.tile { display: flex; align-items: center; gap: 17px; height: 80px; padding: 0 32px; border: 2px solid #879596; border-radius: 4px; }
.tile.on { border-color: #00a1c9; background: #f1faff; }
.sentence { margin: 26px 0 52px; font-size: 27px; }
.rule { display: flex; justify-content: space-between; align-items: flex-start; width: 969px; height: 120px; }
.check { display: flex; gap: 17px; font-size: 27px; }
.src { justify-content: space-between; width: 466px; height: 95px; margin-top: 8px; padding: 0 24px 0 16px; border: 2px solid #879596; border-radius: 4px; text-align: left; }

input[type="radio"], input[type="checkbox"] { flex: none; appearance: none; width: 28px; height: 28px; border: 2px solid #879596; border-radius: 14px; background: #fff; }
input[type="radio"]:checked { border: 8px solid #3573b9; }
input[type="checkbox"] { border-radius: 4px; margin-top: 7px; }
input[type="checkbox"]:checked { border: 0; background: #3573b9; }
input[type="checkbox"]:checked::before { content: ""; display: block; width: 9px; height: 18px; margin: 2px 0 0 9px; border: solid #fff; border-width: 0 4px 4px 0; transform: rotate(45deg); }

.summary-head { height: 129px; padding-top: 37px; }
.side-body .field { height: 64px; font-size: 28px; }
hr { margin: 24px 0 0; border: 0; border-top: 2px solid #eaeded; }
.tip { height: 292px; margin-top: 575px; display: flex; justify-content: flex-end; align-items: flex-start; padding: 42px 46px; border: 2px solid #0a58b5; border-radius: 4px; background: #f1faff; color: #545b64; }
.tip svg, .dismiss svg { width: 26px; height: 26px; }
.launch { display: flex; justify-content: flex-end; padding: 39px 40px; }
.primary, .create { height: 64px; padding: 0 42px; border-radius: 4px; background: #dd7a32; color: #fff; font-size: 27px; font-weight: 700; }

/* dialog */
.backdrop { position: absolute; inset: 0; display: grid; place-items: center; background: rgba(242, 244, 243, .9); }
.modal { width: 1200px; background: #fff; border-top: 2px solid #eaeded; box-shadow: 0 2px 3px rgba(0, 28, 36, .6); }
.modal-head { display: flex; align-items: center; justify-content: space-between; height: 129px; padding: 0 45px 0 40px; background: #fafafa; border-bottom: 2px solid #eaeded; }
.modal-head h2 { font-size: 34px; line-height: 48px; }
.dismiss { color: #545b64; }
.modal-body { display: flex; flex-direction: column; gap: 44px; padding: 32px 40px 40px; line-height: 44px; }
.ext { color: #00e; text-decoration: underline; white-space: pre; }
.ext-icon { display: inline-block; width: 28px; height: 28px; vertical-align: -4px; }
.group small { color: #687078; }
.name { display: block; width: 100%; height: 64px; margin: 9px 0 8px; padding: 0 16px; border: 2px solid #879596; border-radius: 4px; }
.name::placeholder { color: #687078; font-style: italic; }
.radio { display: flex; gap: 17px; height: 82px; margin-top: 10px; font-size: 28px; line-height: 40px; }
.radio input { margin-top: 6px; }
.radio small { margin-top: 1px; }
.group .radio:last-child { height: 74px; }
.modal-foot { display: flex; justify-content: flex-end; gap: 18px; padding: 24px 40px; border-top: 2px solid #eaeded; }
.cancel { padding: 0 40px; color: #545b64; font-weight: 700; }

.footer { flex: none; display: flex; align-items: center; gap: 50px; height: 58px; padding: 0 32px; background: #252f3e; border-top: 2px solid #545b64; color: #fff; font-size: 23px; }
.copy { margin: 0 10px 0 auto; }
```
